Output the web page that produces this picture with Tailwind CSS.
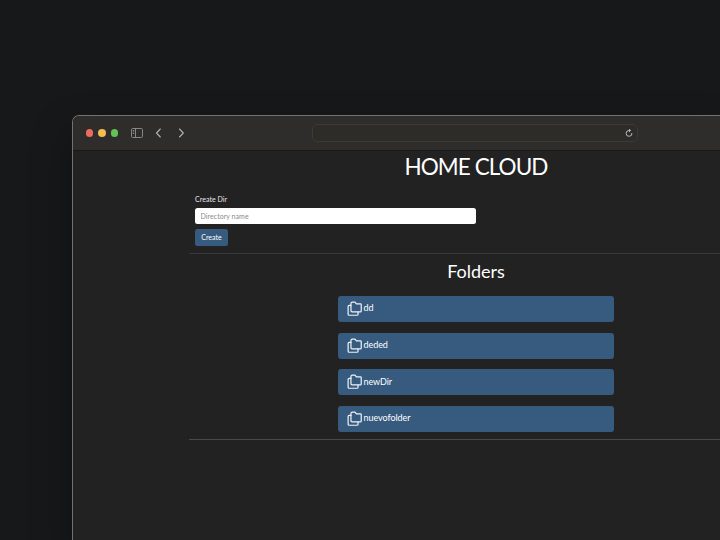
<!DOCTYPE html>
<html lang="en">
<head>
<meta charset="utf-8">
<title>Home Cloud</title>
<script src="https://cdn.jsdelivr.net/npm/@tailwindcss/browser@4"></script>
</head>
<body class="w-[720px] h-[540px] overflow-hidden bg-[#17181a] pl-[72px] pt-[115px] font-['Lato',sans-serif] text-white">
<svg class="hidden">
  <symbol id="folders" viewBox="0 0 24 24" fill="none" stroke="currentColor" stroke-width="1.7" stroke-linecap="round" stroke-linejoin="round">
    <path d="M9 3h3.700l2 2.500H20.500a1 1 0 0 1 1 1V15.500a1.300 1.300 0 0 1-1.300 1.300H8.500a1.500 1.500 0 0 1-1.500-1.500V5a2 2 0 0 1 2-2"/>
    <path d="M17 17v3a1.500 1.500 0 0 1-1.500 1.500H4.500a1.500 1.500 0 0 1-1.500-1.500V9a1.500 1.500 0 0 1 1.500-1.500h2.500"/>
  </symbol>
</svg>
<div class="w-[648px] h-[425px] rounded-tl-[7px] border-t border-l border-[#727272] bg-[#222222] overflow-hidden shadow-[0_20px_40px_rgba(0,0,0,0.35)]">
  <header class="flex items-center h-[35px] pl-[12.500px] bg-[#2e2d2b] border-b border-[#181818]">
    <div class="flex gap-[5px]">
      <span class="size-[7.500px] rounded-full bg-[#ec6a5f]"></span>
      <span class="size-[7.500px] rounded-full bg-[#f4bd50]"></span>
      <span class="size-[7.500px] rounded-full bg-[#61c354]"></span>
    </div>
    <svg class="ml-[12.500px] w-[12px] h-[10px]" viewBox="0 0 12 10" fill="none" stroke="#92918f" stroke-width=".9"><rect x=".5" y=".5" width="11" height="9" rx="1.200"/><path d="M4.500 .5v9M1.800 2.500h1.400M1.800 4h1.400M1.800 5.500h1.400"/></svg>
    <svg class="ml-[12px] w-[7px] h-[10px]" viewBox="0 0 7 10" fill="none" stroke="#b0b0b0" stroke-width="1.100" stroke-linecap="round" stroke-linejoin="round"><path d="M5.300 1 1.500 5l3.800 4"/></svg>
    <svg class="ml-[16px] w-[7px] h-[10px]" viewBox="0 0 7 10" fill="none" stroke="#b0b0b0" stroke-width="1.100" stroke-linecap="round" stroke-linejoin="round"><path d="M1.500 1 5.300 5l-3.800 4"/></svg>
    <div class="ml-[127px] w-[326px] h-[18px] shrink-0 rounded-[5px] border border-[#3b3a37] bg-[#2d2c29] flex items-center justify-end pr-[4px]">
      <svg class="size-[8px]" viewBox="0 0 8 8" fill="none" stroke="#b8b8b8" stroke-width="1"><path d="M6.900 4a2.900 2.900 0 1 1-2.900-2.500h1.300"/><path d="M4 0 5.600 1.500 4 3.100"/></svg>
    </div>
  </header>
  <main class="ml-[116px] w-[574px]">
    <h1 class="h-[34px] text-center text-[22.500px] leading-[32px] tracking-[-0.950px]">HOME CLOUD</h1>
    <form class="flex flex-col items-start pl-[6px] pt-[9px] h-[67px]">
      <label class="text-[7px] leading-[10px] tracking-[0.05px] text-[#e6e6e6]">Create Dir</label>
      <input class="mt-[4px] w-[281px] h-[16px] shrink-0 rounded-[2.500px] bg-white px-[5.500px] text-[7px] tracking-[0.05px] placeholder:text-[#8b8b8b]" placeholder="Directory name">
      <button type="button" class="mt-[4.500px] w-[33px] h-[17px] shrink-0 rounded-[2.500px] bg-[#375a7f] text-[7px] leading-[17px]">Create</button>
    </form>
    <section class="mt-[1px] border-t border-t-[#393939] border-b border-b-[#4a4a4a] h-[187px]">
      <h2 class="h-[42px] pt-[3px] text-center text-[18px] leading-[28px]">Folders</h2>
      <ul class="mx-auto w-[276px] flex flex-col gap-[10.700px]">
        <li class="flex items-center h-[26px] pl-[7.700px] rounded-[3px] bg-[#375a7f] text-[9px]"><svg class="size-[17px] mr-[0.800px] mb-[1px] text-[#eef3f8]"><use href="#folders"/></svg><span class="pb-[2px] tracking-[-0.05px]">dd</span></li>
        <li class="flex items-center h-[26px] pl-[7.700px] rounded-[3px] bg-[#375a7f] text-[9px]"><svg class="size-[17px] mr-[0.800px] mb-[1px] text-[#eef3f8]"><use href="#folders"/></svg><span class="pb-[2px] tracking-[-0.05px]">deded</span></li>
        <li class="flex items-center h-[26px] pl-[7.700px] rounded-[3px] bg-[#375a7f] text-[9px]"><svg class="size-[17px] mr-[0.800px] mb-[1px] text-[#eef3f8]"><use href="#folders"/></svg><span class="pb-[2px] tracking-[-0.05px]">newDir</span></li>
        <li class="flex items-center h-[26px] pl-[7.700px] rounded-[3px] bg-[#375a7f] text-[9px]"><svg class="size-[17px] mr-[0.800px] mb-[1px] text-[#eef3f8]"><use href="#folders"/></svg><span class="pb-[2px] tracking-[-0.05px]">nuevofolder</span></li>
      </ul>
    </section>
  </main>
</div>
</body>
</html>
